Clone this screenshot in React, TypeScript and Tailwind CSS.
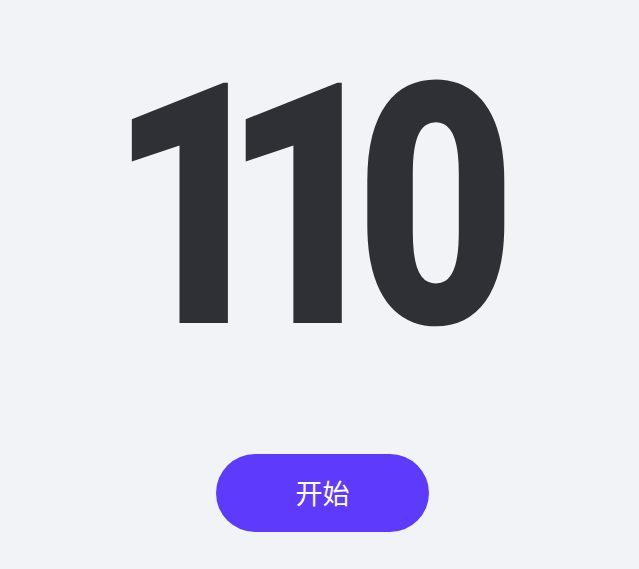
import React from "react";

export default function App() {
  return (
    <div className="min-h-[569px] w-full bg-[#f2f3f7] flex flex-col items-center pt-[39px]">
      <div
        className="text-[338px] leading-none font-black text-[#2e3035] scale-x-[0.87] -translate-x-[5px] select-none whitespace-nowrap"
        style={{ fontFamily: "Roboto, 'Liberation Sans', sans-serif" }}
      >
        <span className="tracking-[-65px]">11</span>
        <span className="inline-block ml-[17px] scale-x-[0.94]">0</span>
      </div>
      <button
        className="mt-[77px] ml-[6px] w-[213px] h-[78px] rounded-full bg-[#5e3afd] text-white text-[27px]"
        style={{ fontFamily: "'Noto Sans CJK SC', 'Noto Sans', sans-serif" }}
      >
        开始
      </button>
    </div>
  );
}
